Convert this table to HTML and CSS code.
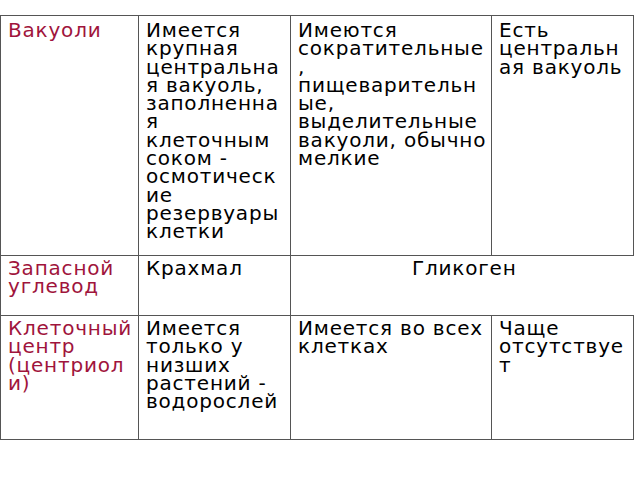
FILE: index.html
```html
<!DOCTYPE html>
<html lang="ru">
<head>
<meta charset="utf-8">
<link rel="stylesheet" href="styles.css">
</head>
<body>
<table class="cmp">
  <colgroup>
    <col class="c1"><col class="c2"><col class="c3"><col class="c4">
  </colgroup>
  <tr class="r1">
    <td class="head">Вакуоли</td>
    <td>Имеется крупная центральная вакуоль, заполненная клеточным соком - осмотические резервуары клетки</td>
    <td>Имеются сократительные, пищеварительные, выделительные вакуоли, обычно мелкие</td>
    <td>Есть центральная вакуоль</td>
  </tr>
  <tr class="r2">
    <td class="head">Запасной углевод</td>
    <td>Крахмал</td>
    <td class="merged" colspan="2">Гликоген</td>
  </tr>
  <tr class="r3">
    <td class="head">Клеточный центр (центриоли)</td>
    <td>Имеется только у низших растений - водорослей</td>
    <td>Имеется во всех клетках</td>
    <td>Чаще отсутствует</td>
  </tr>
</table>
</body>
</html>
```
FILE: styles.css
```css
html, body {
  margin: 0;
  padding: 0;
  background: #ffffff;
}
body {
  font-family: "DejaVu Sans", sans-serif;
  font-size: 20px;
  letter-spacing: 0.8px;
  color: #000000;
}
.cmp {
  margin-top: 15px;
  border-collapse: collapse;
  table-layout: fixed;
  width: 633px;
}
.c1 { width: 138px; }
.c2 { width: 152px; }
.c3 { width: 201px; }
.c4 { width: 142px; }
.cmp td {
  border: 1px solid #555555;
  vertical-align: top;
  padding: 3px 3px 0 7px;
  line-height: 18.3px;
  overflow-wrap: break-word;
  word-wrap: break-word;
}
.r1 { height: 240px; }
.r1 td { padding-top: 5px; }
.r2 { height: 60px; }
.r3 { height: 124px; }
.cmp td.head {
  color: #a0143c;
}
.cmp td.merged {
  text-align: center;
  border-right: none;
}
```
